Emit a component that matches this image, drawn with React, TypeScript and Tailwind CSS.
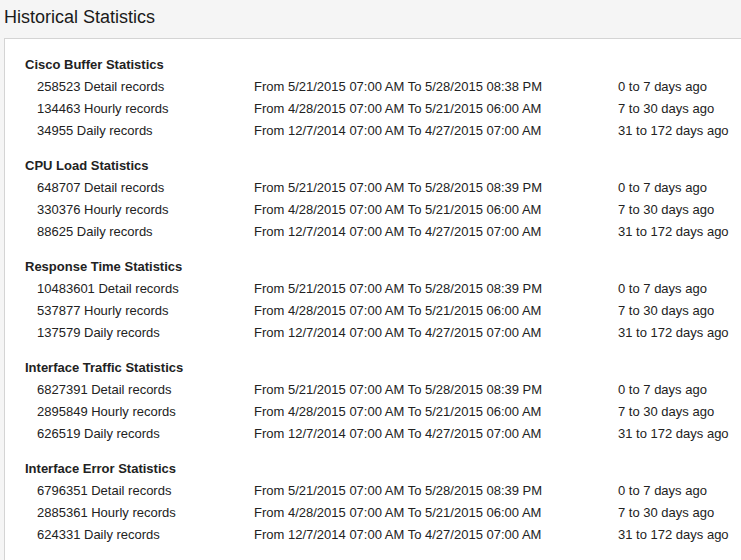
import React from "react";

type Row = [string, string, string];
type Section = { title: string; rows: Row[] };

const sections: Section[] = [
  {
    title: "Cisco Buffer Statistics",
    rows: [
      ["258523 Detail records", "From 5/21/2015 07:00 AM To 5/28/2015 08:38 PM", "0 to 7 days ago"],
      ["134463 Hourly records", "From 4/28/2015 07:00 AM To 5/21/2015 06:00 AM", "7 to 30 days ago"],
      ["34955 Daily records", "From 12/7/2014 07:00 AM To 4/27/2015 07:00 AM", "31 to 172 days ago"],
    ],
  },
  {
    title: "CPU Load Statistics",
    rows: [
      ["648707 Detail records", "From 5/21/2015 07:00 AM To 5/28/2015 08:39 PM", "0 to 7 days ago"],
      ["330376 Hourly records", "From 4/28/2015 07:00 AM To 5/21/2015 06:00 AM", "7 to 30 days ago"],
      ["88625 Daily records", "From 12/7/2014 07:00 AM To 4/27/2015 07:00 AM", "31 to 172 days ago"],
    ],
  },
  {
    title: "Response Time Statistics",
    rows: [
      ["10483601 Detail records", "From 5/21/2015 07:00 AM To 5/28/2015 08:39 PM", "0 to 7 days ago"],
      ["537877 Hourly records", "From 4/28/2015 07:00 AM To 5/21/2015 06:00 AM", "7 to 30 days ago"],
      ["137579 Daily records", "From 12/7/2014 07:00 AM To 4/27/2015 07:00 AM", "31 to 172 days ago"],
    ],
  },
  {
    title: "Interface Traffic Statistics",
    rows: [
      ["6827391 Detail records", "From 5/21/2015 07:00 AM To 5/28/2015 08:39 PM", "0 to 7 days ago"],
      ["2895849 Hourly records", "From 4/28/2015 07:00 AM To 5/21/2015 06:00 AM", "7 to 30 days ago"],
      ["626519 Daily records", "From 12/7/2014 07:00 AM To 4/27/2015 07:00 AM", "31 to 172 days ago"],
    ],
  },
  {
    title: "Interface Error Statistics",
    rows: [
      ["6796351 Detail records", "From 5/21/2015 07:00 AM To 5/28/2015 08:39 PM", "0 to 7 days ago"],
      ["2885361 Hourly records", "From 4/28/2015 07:00 AM To 5/21/2015 06:00 AM", "7 to 30 days ago"],
      ["624331 Daily records", "From 12/7/2014 07:00 AM To 4/27/2015 07:00 AM", "31 to 172 days ago"],
    ],
  },
];

export default function App() {
  return (
    <div
      className="w-[741px] h-[560px] overflow-hidden bg-[#f5f5f5] text-[#222]"
      style={{ fontFamily: '"Liberation Sans", Arial, sans-serif' }}
    >
      <div className="h-[38px] pl-[4px] pt-[5px] text-[18px] leading-[24px] text-[#1a1a1a]">
        Historical Statistics
      </div>
      <div className="ml-[4px] h-[522px] bg-white border-t border-l border-[#d4d4d4] pt-[15px] pl-[20px]">
        {sections.map((s) => (
          <div key={s.title} className="mb-[13px]">
            <div className="text-[13px] leading-[22px] font-bold">{s.title}</div>
            {s.rows.map((r) => (
              <div
                key={r[0]}
                className="grid grid-cols-[217px_364px_1fr] pl-[12px] text-[13px] leading-[22px]"
              >
                <div className="whitespace-nowrap">{r[0]}</div>
                <div className="whitespace-nowrap">{r[1]}</div>
                <div className="whitespace-nowrap">{r[2]}</div>
              </div>
            ))}
          </div>
        ))}
      </div>
    </div>
  );
}
